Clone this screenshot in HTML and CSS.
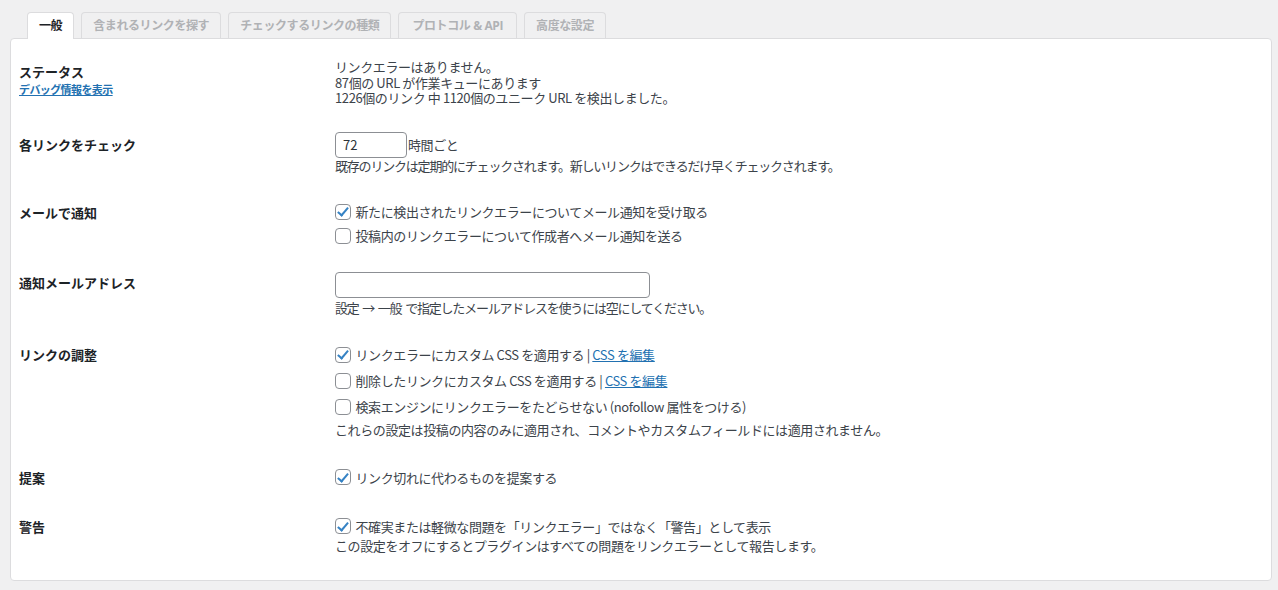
FILE: index.html
```html
<!DOCTYPE html>
<html lang="ja">
<head>
  <meta charset="UTF-8">
  <meta name="viewport" content="width=device-width, initial-scale=1.0">
  <title>リンクチェッカー設定</title>
  <link rel="stylesheet" href="styles.css">
</head>
<body>
  <nav class="tabs">
    <a href="#" class="tab tab-active">一般</a>
    <a href="#" class="tab">含まれるリンクを探す</a>
    <a href="#" class="tab">チェックするリンクの種類</a>
    <a href="#" class="tab tab-latin">プロトコル &amp; API</a>
    <a href="#" class="tab">高度な設定</a>
  </nav>

  <div class="panel">
    <div class="row">
      <div class="row-label">
        ステータス<br>
        <a href="#" class="debug-link">デバッグ情報を表示</a>
      </div>
      <div class="row-field">
        <div class="line">リンクエラーはありません。</div>
        <div class="line">87個の URL が作業キューにあります</div>
        <div class="line">1226個のリンク 中 1120個のユニーク URL を検出しました。</div>
      </div>
    </div>

    <div class="row">
      <div class="row-label">各リンクをチェック</div>
      <div class="row-field">
        <div class="input-line">
          <input type="text" class="text-input input-small" value="72">
          <span>時間ごと</span>
        </div>
        <div class="line line-narrow">既存のリンクは定期的にチェックされます。新しいリンクはできるだけ早くチェックされます。</div>
      </div>
    </div>

    <div class="row row-short">
      <div class="row-label">メールで通知</div>
      <div class="row-field">
        <label class="check"><input type="checkbox" checked> 新たに検出されたリンクエラーについてメール通知を受け取る</label>
        <label class="check"><input type="checkbox"> 投稿内のリンクエラーについて作成者へメール通知を送る</label>
      </div>
    </div>

    <div class="row">
      <div class="row-label label-high">通知メールアドレス</div>
      <div class="row-field">
        <div class="input-line">
          <input type="text" class="text-input input-wide" value="">
        </div>
        <div class="line line-spaced line-narrow">設定 → 一般 で指定したメールアドレスを使うには空にしてください。</div>
      </div>
    </div>

    <div class="row">
      <div class="row-label">リンクの調整</div>
      <div class="row-field">
        <label class="check check-tall"><input type="checkbox" checked> リンクエラーにカスタム CSS を適用する | <a href="#">CSS を編集</a></label>
        <label class="check check-tall"><input type="checkbox"> 削除したリンクにカスタム CSS を適用する | <a href="#">CSS を編集</a></label>
        <label class="check check-tall"><input type="checkbox"> 検索エンジンにリンクエラーをたどらせない (nofollow 属性をつける)</label>
        <div class="line line-spaced">これらの設定は投稿の内容のみに適用され、コメントやカスタムフィールドには適用されません。</div>
      </div>
    </div>

    <div class="row row-roomy">
      <div class="row-label">提案</div>
      <div class="row-field">
        <label class="check"><input type="checkbox" checked> リンク切れに代わるものを提案する</label>
      </div>
    </div>

    <div class="row">
      <div class="row-label">警告</div>
      <div class="row-field">
        <label class="check"><input type="checkbox" checked> 不確実または軽微な問題を「リンクエラー」ではなく「警告」として表示</label>
        <div class="line">この設定をオフにするとプラグインはすべての問題をリンクエラーとして報告します。</div>
      </div>
    </div>
  </div>
</body>
</html>
```

FILE: styles.css
```css
* {
  box-sizing: border-box;
}

body {
  margin: 0;
  padding: 12px 6px 0 10px;
  background: #f0f0f1;
  color: #3c434a;
  font-family: "Noto Sans CJK JP", "Noto Sans", sans-serif;
  font-size: 13px;
  font-feature-settings: "pkna";
}

a {
  color: #2271b1;
}

/* Tabs */

.tabs {
  display: flex;
  align-items: flex-start;
  gap: 7px;
  padding-left: 17px;
  margin-bottom: -1px;
}

.tab {
  height: 26px;
  padding: 0 11px;
  border: 1px solid #dcdcde;
  border-bottom: none;
  border-radius: 4px 4px 0 0;
  background: #f0f0f1;
  color: #b0b2b5;
  font-family: "Open Sans", "Noto Sans CJK JP", sans-serif;
  font-size: 12px;
  font-weight: 700;
  font-feature-settings: normal;
  letter-spacing: -0.4px;
  line-height: 25px;
  text-decoration: none;
}

.tab-latin {
  padding: 0 13px;
}

.tab-active {
  position: relative;
  z-index: 1;
  height: 27px;
  background: #fff;
  color: #1d2327;
}

/* Panel */

.panel {
  background: #fff;
  border: 1px solid #dcdcde;
  border-radius: 4px;
  padding: 7px 8px 13px;
}

.row {
  display: grid;
  grid-template-columns: 316px 1fr;
  padding: 13px 0;
}

.row-short {
  padding-bottom: 11px;
}

.row-roomy {
  padding: 15px 0 12px;
}

.row-label {
  padding-top: 4px;
  color: #1d2327;
  font-weight: 700;
  line-height: 17px;
}

.label-high {
  padding-top: 2px;
}

.debug-link {
  font-size: 11px;
  letter-spacing: -0.6px;
}

.row-field {
  display: flex;
  flex-direction: column;
  align-items: flex-start;
  letter-spacing: -0.4px;
}

.line {
  line-height: 15.5px;
}

.input-line + .line {
  line-height: 16px;
}

.line-spaced {
  margin-top: 2px;
}

.line-narrow {
  letter-spacing: -1.2px;
  word-spacing: 2px;
}

.input-line {
  display: flex;
  align-items: center;
  gap: 1px;
  height: 26px;
}

.text-input {
  height: 26px;
  padding: 0 7px;
  border: 1px solid #8c8f94;
  border-radius: 4px;
  background: #fff;
  color: #2c3338;
  font-family: inherit;
  font-size: 13px;
}

.input-small {
  width: 72px;
}

.input-wide {
  width: 315px;
}

/* Checkboxes */

.check {
  display: flex;
  align-items: center;
  height: 24px;
  white-space: pre;
}

.check-tall {
  height: 26px;
}

.check input {
  appearance: none;
  -webkit-appearance: none;
  display: inline-flex;
  align-items: center;
  justify-content: center;
  width: 16px;
  height: 16px;
  margin: 0 2px 0 0;
  border: 1px solid #8c8f94;
  border-radius: 4px;
  background: #fff;
}

.check input:checked::before {
  content: "";
  width: 4px;
  height: 9px;
  margin-top: -2px;
  border: solid #3582c4;
  border-width: 0 2.5px 2.5px 0;
  transform: rotate(40deg);
}
```
